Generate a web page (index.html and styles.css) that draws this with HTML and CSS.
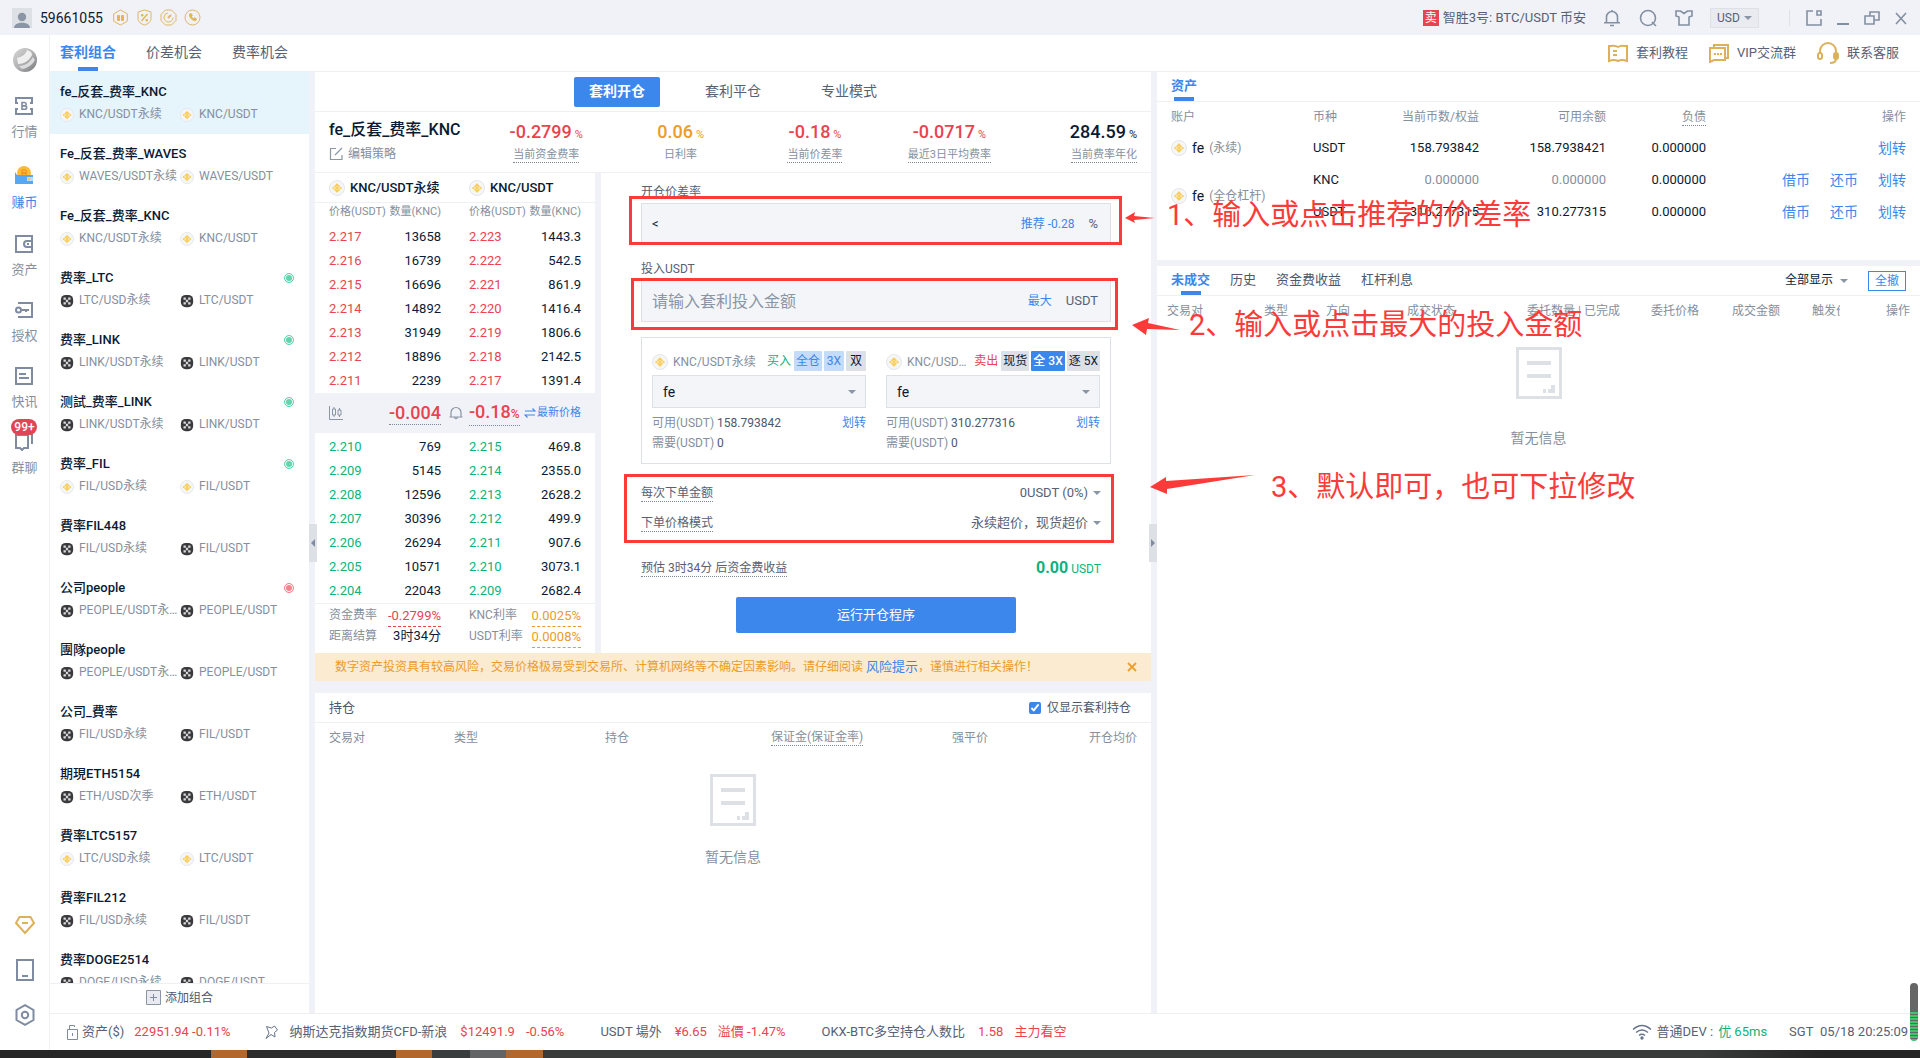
FILE: index.html
```html
<!DOCTYPE html>
<html lang="zh-CN">
<head>
<meta charset="utf-8">
<title>套利组合</title>
<link rel="stylesheet" href="styles.css">
</head>
<body>
<svg class="sprite" aria-hidden="true">
  <symbol id="bn" viewBox="0 0 16 16"><circle cx="8" cy="8" r="7.5" fill="#f5f6f8" stroke="#e3e6ea"/><path d="M8 3l5 5-5 5-5-5z" fill="#fbe3a6"/><path d="M8 3.6l2.600 2.600-1 1L8 5.600 6.400 7.200l-1-1zM8 12.400l2.600-2.600-1-1L8 10.400 6.400 8.800l-1 1zM8 6.700L9.300 8 8 9.300 6.700 8zM4.200 6.900L5.300 8 4.200 9.100 3.100 8zM11.800 6.900L12.900 8l-1.100 1.100L10.700 8z" fill="#f7c94f"/></symbol>
  <symbol id="ok" viewBox="0 0 16 16"><rect x="1" y="1" width="14" height="14" rx="5.500" fill="#3a3a3c"/><path d="M4 4h2.700v2.700H4zM9.300 4H12v2.700H9.300zM6.700 6.700h2.600v2.600H6.700zM4 9.300h2.700V12H4zM9.300 9.300H12V12H9.300z" fill="#d9dadc"/></symbol>
  <symbol id="doc" viewBox="0 0 46 52"><path d="M1.500 1.500h43v49h-43z" fill="#fff" stroke="#dde0e5" stroke-width="3"/><path d="M11 14h24v4H11zM11 27h24v4H11zM27 42h3v4h-3zM32 42h3v-4h4v8h-7z" fill="#dde0e5"/></symbol>
</svg>
<div class="app">
  <header class="titlebar">
    <div class="user">
      <svg width="20" height="20" viewBox="0 0 20 20"><path d="M0 0h20v20H0z" fill="#dde0e5"/><circle cx="10" cy="9" r="4.200" fill="#8a95a5"/><path d="M2 20c0-7 16-7 16 0z" fill="#8a95a5"/></svg>
      <span class="uid">59661055</span>
      <span class="medals">
        <svg width="17" height="17" viewBox="0 0 17 17" fill="none" stroke="#e0b65f"><path d="M8.500 1l6.800 3.800v7.400L8.500 16l-6.800-3.800V4.800z"/><path d="M5.500 6.500h2v5h-2zM9.500 6.500h2v5h-2z" fill="#e6b450"/></svg>
        <svg width="17" height="17" viewBox="0 0 17 17" fill="none" stroke="#e0b65f"><path d="M8.500 1l6.500 2v6c0 4-3 6-6.500 7C5 15 2 13 2 9V3z"/><path d="M11.500 5l-6 7" stroke-width="1.500"/><path d="M5.500 5.500h1.500v1.500H5.500zM10 10.500h1.500V12H10z" fill="#e6b450"/></svg>
        <svg width="17" height="17" viewBox="0 0 17 17" fill="none" stroke="#e0b65f"><path d="M5.500 1h6L16 5.500v6L11.500 16h-6L1 11.500v-6z"/><circle cx="8.500" cy="8.500" r="4.500" stroke-dasharray="20 8"/><path d="M8 9l3-3" stroke-width="1.800"/></svg>
        <svg width="17" height="17" viewBox="0 0 17 17" fill="none" stroke="#e0b65f"><circle cx="8.500" cy="8.500" r="7.500"/><path d="M5.500 5c-.5 3.500 3 7 6.500 6.500l.3-1.800-2-.9-.9.9c-1-.5-1.700-1.300-2-2.100l.9-.9-.9-2z" fill="#e6b450"/></svg>
      </span>
    </div>
    <div class="tools">
      <span class="sell">卖</span><span class="ticker">智胜3号: BTC/USDT 币安</span>
      <svg class="t1" width="18" height="18" viewBox="0 0 18 18" fill="none" stroke="#8390a2" stroke-width="1.600"><path d="M3.500 13V8a5.500 5.500 0 0 1 11 0v5M1 13.800h16M9 1v2M7 16.500h4"/></svg>
      <svg class="t2" width="18" height="18" viewBox="0 0 18 18" fill="none" stroke="#8390a2" stroke-width="1.600"><circle cx="9" cy="9" r="7.500"/><path d="M13 13l4 4"/></svg>
      <svg class="t2" width="18" height="18" viewBox="0 0 18 18" fill="none" stroke="#8390a2" stroke-width="1.600"><path d="M1 2h4.500L9 4.500 12.500 2H17v5l-3 1v8H4V8L1 7z"/></svg>
      <label class="cur"><select aria-label="货币"><option>USD</option></select></label>
      <i class="sep"></i>
      <svg class="t4" width="16" height="16" viewBox="0 0 16 16" fill="none" stroke="#8390a2" stroke-width="1.600"><path d="M7 1H1v14h14V9M11 1h4v4h-4z"/></svg>
      <svg class="t5" width="12" height="16" viewBox="0 0 12 16"><path d="M0 13h12v2H0z" fill="#8390a2"/></svg>
      <svg class="t5" width="16" height="16" viewBox="0 0 16 16" fill="none" stroke="#8390a2" stroke-width="1.600"><path d="M1 6h9v8H1zM6 6V2h9v8h-5"/></svg>
      <svg class="t5" width="12" height="16" viewBox="0 0 12 16" fill="none" stroke="#8390a2" stroke-width="1.600"><path d="M1 3l10 11M11 3L1 14"/></svg>
    </div>
  </header>

  <div class="body">
    <nav class="rail">
      <svg class="logo" width="24" height="24" viewBox="0 0 24 24"><defs><linearGradient id="g" x1="0" y1="0" x2="1" y2="1"><stop offset="0" stop-color="#d8d8d8"/><stop offset=".5" stop-color="#b2b2b4"/><stop offset="1" stop-color="#77787b"/></linearGradient></defs><circle cx="12" cy="12" r="12" fill="url(#g)"/><path d="M4 10C9 9 13 6 14 2c4 1 5 3 5 5-3 6-8 9-14 9z" fill="#efefef"/><path d="M6 18c6 0 11-4 14-9l2 3c-3 5-7 8-13 9z" fill="#dcdcdd"/></svg>
      <a class="nav" href="#"><svg width="18" height="18" viewBox="0 0 18 18" fill="none" stroke="#7f8ba0" stroke-width="2"><path d="M1 7V1h16v6M1 11v6h16v-6M1 6h2M1 12h2M17 6h-2M17 12h-2"/><path d="M7 5.500h2.500a1.700 1.700 0 0 1 0 3.400H7h3a1.700 1.700 0 0 1 0 3.400H7z" stroke-width="1.600"/></svg>行情</a>
      <a class="nav on" href="#"><svg width="18" height="18" viewBox="0 0 18 18"><circle cx="9" cy="7" r="7" fill="#fbbb35"/><path d="M7 4h3a1 1 0 0 1 0 3H7zM7 7h4v3H7z" fill="none" stroke="#ef8d1c"/><path d="M0 6l2 3h16v9H0z" fill="#56a8f5"/><path d="M12 11h6v4h-6z" fill="#bcdcff"/><circle cx="14" cy="13" r="1.200" fill="#f6c544"/></svg>赚币</a>
      <a class="nav" href="#"><svg width="18" height="18" viewBox="0 0 18 18" fill="none" stroke="#7f8ba0" stroke-width="2"><path d="M1 1h16v16H1z"/><path d="M17 6h-5a3 3 0 0 0 0 6h5M12 9h2"/></svg>资产</a>
      <a class="nav" href="#"><svg width="18" height="18" viewBox="0 0 18 18" fill="none" stroke="#7f8ba0" stroke-width="2"><path d="M4 3V2h13v14H4v-1"/><circle cx="3.500" cy="9" r="2.500"/><path d="M6 9h8M11 8v3" /></svg>授权</a>
      <a class="nav" href="#"><svg width="18" height="18" viewBox="0 0 18 18" fill="none" stroke="#7f8ba0" stroke-width="2"><path d="M1 1h16v16H1zM4 7h7M4 11h10"/></svg>快讯</a>
      <a class="nav" href="#"><svg width="18" height="18" viewBox="0 0 18 18" fill="none" stroke="#7f8ba0" stroke-width="2"><path d="M1 2h12v13H9l-2 2-2-2H1zM14 1h3v10"/></svg>群聊<b class="badge">99+</b></a>
      <div class="railend">
        <svg width="20" height="22" viewBox="0 0 20 22" fill="none" stroke="#dcb15b" stroke-width="2"><path d="M4.500 3h11L19 9l-9 10L1 9zM7 9h6"/></svg>
        <svg width="20" height="22" viewBox="0 0 20 22" fill="none" stroke="#7f8ba0" stroke-width="2"><path d="M2 1h16v20H2zM7 17h6"/></svg>
        <svg width="20" height="22" viewBox="0 0 20 22" fill="none" stroke="#7f8ba0" stroke-width="2"><path d="M10 1.200l8.500 4.800v10L10 20.800 1.500 16V6z"/><circle cx="10" cy="11" r="3.200"/></svg>
      </div>
    </nav>

    <div class="work">
      <div class="subhead">
        <div class="tabs">
          <a class="on" href="#">套利组合</a><a href="#">价差机会</a><a href="#">费率机会</a>
        </div>
        <div class="help">
          <a href="#"><svg width="20" height="20" viewBox="0 0 20 20" fill="none" stroke="#dcb15b" stroke-width="2"><path d="M1 3l2 0q4-1 7 1 3-2 7-1l2 0v15q-5-2-9 0-4-2-9 0zM5 8h4M5 12h4"/></svg>套利教程</a>
          <a href="#"><svg width="20" height="20" viewBox="0 0 20 20" fill="none" stroke="#dcb15b" stroke-width="2"><path d="M5 4V2h14v13h-3M1 5h15v12H5l-4 2z"/><path d="M5 11h2M8 11h2M11 11h2"/></svg>VIP交流群</a>
          <a href="#"><svg width="22" height="22" viewBox="0 0 22 22" fill="none" stroke="#dcb15b" stroke-width="2"><path d="M3 11V9a8 8 0 0 1 16 0v8q0 4-6 4"/><rect x="1" y="11" width="4" height="6" rx="2"/><rect x="17" y="11" width="4" height="6" rx="2"/></svg>联系客服</a>
        </div>
      </div>

      <div class="cols">
        <aside class="side">
          <ul class="combos">
            <li class="on"><h3>fe_反套_费率_KNC</h3><p><svg><use href="#bn"/></svg><span>KNC/USDT永续</span><svg><use href="#bn"/></svg><span>KNC/USDT</span></p></li>
            <li><h3>Fe_反套_费率_WAVES</h3><p><svg><use href="#bn"/></svg><span>WAVES/USDT永续</span><svg><use href="#bn"/></svg><span>WAVES/USDT</span></p></li>
            <li><h3>Fe_反套_费率_KNC</h3><p><svg><use href="#bn"/></svg><span>KNC/USDT永续</span><svg><use href="#bn"/></svg><span>KNC/USDT</span></p></li>
            <li><h3>费率_LTC<i class="dot"></i></h3><p><svg><use href="#ok"/></svg><span>LTC/USD永续</span><svg><use href="#ok"/></svg><span>LTC/USDT</span></p></li>
            <li><h3>费率_LINK<i class="dot"></i></h3><p><svg><use href="#ok"/></svg><span>LINK/USDT永续</span><svg><use href="#ok"/></svg><span>LINK/USDT</span></p></li>
            <li><h3>测試_费率_LINK<i class="dot"></i></h3><p><svg><use href="#ok"/></svg><span>LINK/USDT永续</span><svg><use href="#ok"/></svg><span>LINK/USDT</span></p></li>
            <li><h3>费率_FIL<i class="dot"></i></h3><p><svg><use href="#bn"/></svg><span>FIL/USD永续</span><svg><use href="#bn"/></svg><span>FIL/USDT</span></p></li>
            <li><h3>費率FIL448</h3><p><svg><use href="#ok"/></svg><span>FIL/USD永续</span><svg><use href="#ok"/></svg><span>FIL/USDT</span></p></li>
            <li><h3>公司people<i class="dot stop"></i></h3><p><svg><use href="#ok"/></svg><span>PEOPLE/USDT永续</span><svg><use href="#ok"/></svg><span>PEOPLE/USDT</span></p></li>
            <li><h3>團隊people</h3><p><svg><use href="#ok"/></svg><span>PEOPLE/USDT永续</span><svg><use href="#ok"/></svg><span>PEOPLE/USDT</span></p></li>
            <li><h3>公司_費率</h3><p><svg><use href="#ok"/></svg><span>FIL/USD永续</span><svg><use href="#ok"/></svg><span>FIL/USDT</span></p></li>
            <li><h3>期現ETH5154</h3><p><svg><use href="#ok"/></svg><span>ETH/USD次季</span><svg><use href="#ok"/></svg><span>ETH/USDT</span></p></li>
            <li><h3>費率LTC5157</h3><p><svg><use href="#bn"/></svg><span>LTC/USD永续</span><svg><use href="#bn"/></svg><span>LTC/USDT</span></p></li>
            <li><h3>費率FIL212</h3><p><svg><use href="#ok"/></svg><span>FIL/USD永续</span><svg><use href="#ok"/></svg><span>FIL/USDT</span></p></li>
            <li><h3>费率DOGE2514</h3><p><svg><use href="#ok"/></svg><span>DOGE/USD永续</span><svg><use href="#ok"/></svg><span>DOGE/USDT</span></p></li>
          </ul>
          <button class="add" type="button"><svg width="15" height="15" viewBox="0 0 15 15"><path d="M.5.500h14v14H.5z" fill="#e8eaef" stroke="#8a95a5"/><path d="M7.500 4v7M4 7.500h7" stroke="#7f8ba0"/></svg>添加组合</button>
        </aside>

        <main class="main">
          <div class="modes"><button class="on" type="button">套利开仓</button><button type="button">套利平仓</button><button type="button">专业模式</button></div>
          <section class="stats">
            <div class="name"><h2>fe_反套_费率_KNC</h2><a href="#"><svg width="14" height="14" viewBox="0 0 14 14" fill="none" stroke="#8a95a5" stroke-width="1.200"><path d="M7 1.500H1.500v11H13V8M6 8l7-7"/></svg>编辑策略</a></div>
            <div class="red"><b>-0.2799</b> <small>%</small><p><u>当前资金费率</u></p></div>
            <div class="gold"><b>0.06</b> <small>%</small><p>日利率</p></div>
            <div class="red"><b>-0.18</b> <small>%</small><p><u>当前价差率</u></p></div>
            <div class="red"><b>-0.0717</b> <small>%</small><p><u>最近3日平均费率</u></p></div>
            <div class="last"><b>284.59</b> <small>%</small><p><u>当前费率年化</u></p></div>
          </section>
          <div class="trade">
            <section class="book">
              <div class="pair"><span><svg><use href="#bn"/></svg>KNC/USDT永续</span><span><svg><use href="#bn"/></svg>KNC/USDT</span></div>
              <table class="asks">
                <thead><tr><th>价格(USDT)</th><th>数量(KNC)</th><th>价格(USDT)</th><th>数量(KNC)</th></tr></thead>
                <tbody>
                <tr><td>2.217</td><td>13658</td><td>2.223</td><td>1443.3</td></tr>
                <tr><td>2.216</td><td>16739</td><td>2.222</td><td>542.5</td></tr>
                <tr><td>2.215</td><td>16696</td><td>2.221</td><td>861.9</td></tr>
                <tr><td>2.214</td><td>14892</td><td>2.220</td><td>1416.4</td></tr>
                <tr><td>2.213</td><td>31949</td><td>2.219</td><td>1806.6</td></tr>
                <tr><td>2.212</td><td>18896</td><td>2.218</td><td>2142.5</td></tr>
                <tr><td>2.211</td><td>2239</td><td>2.217</td><td>1391.4</td></tr>
                </tbody>
              </table>
              <div class="mid">
                <svg width="14" height="14" viewBox="0 0 14 14" fill="none" stroke="#8a95a5"><path d="M.5 0v13.500H14M5 1v2M5 9v2M3.500 3h3v6h-3zM10.500 2v2M10.500 9v2M9 4h3v5H9z"/></svg>
                <b class="diff"><u>-0.004</u></b>
                <svg class="bell" width="14" height="14" viewBox="0 0 14 14" fill="none" stroke="#8a95a5" stroke-width="1.200"><path d="M2 11V6.500a5 5 0 0 1 10 0V11M.5 11h13M5.500 11.500q1.500 2.500 3 0"/></svg>
                <b><u>-0.18<small>%</small></u></b>
                <a href="#"><svg width="12" height="10" viewBox="0 0 12 10" fill="none" stroke="#3b87ec" stroke-width="1.200"><path d="M1 3h10L8.500.5M11 7H1l2.500 2.500"/></svg>最新价格</a>
              </div>
              <table class="bids">
                <tbody>
                <tr><td>2.210</td><td>769</td><td>2.215</td><td>469.8</td></tr>
                <tr><td>2.209</td><td>5145</td><td>2.214</td><td>2355.0</td></tr>
                <tr><td>2.208</td><td>12596</td><td>2.213</td><td>2628.2</td></tr>
                <tr><td>2.207</td><td>30396</td><td>2.212</td><td>499.9</td></tr>
                <tr><td>2.206</td><td>26294</td><td>2.211</td><td>907.6</td></tr>
                <tr><td>2.205</td><td>10571</td><td>2.210</td><td>3073.1</td></tr>
                <tr><td>2.204</td><td>22043</td><td>2.209</td><td>2682.4</td></tr>
                </tbody>
              </table>
              <div class="rates">
                <span>资金费率<u class="red">-0.2799%</u></span><span>KNC利率<u class="gold">0.0025%</u></span>
                <span>距离结算<em>3时34分</em></span><span>USDT利率<u class="gold">0.0008%</u></span>
              </div>
            </section>

            <form class="form">
              <label class="lab" for="spread">开仓价差率</label>
              <div class="field"><span class="lt">&lt;</span><input id="spread" type="text"><button type="button">推荐 -0.28</button><span class="unit">%</span></div>
              <label class="lab second" for="amount">投入USDT</label>
              <div class="field"><input id="amount" type="text" placeholder="请输入套利投入金额"><button type="button">最大</button><span class="unit">USDT</span></div>
              <div class="legs">
                <div class="leg">
                  <div class="tags"><svg><use href="#bn"/></svg><span class="sym">KNC/USDT永续</span><span class="side-tag green">买入</span><button class="soft" type="button">全仓</button><button class="soft" type="button">3X</button><button type="button">双</button></div>
                  <label class="pick"><select aria-label="永续账户"><option>fe</option></select></label>
                  <p>可用(USDT) <em>158.793842</em><a href="#">划转</a></p>
                  <p>需要(USDT) <em>0</em></p>
                </div>
                <div class="leg">
                  <div class="tags"><svg><use href="#bn"/></svg><span class="sym">KNC/USDT现货</span><span class="side-tag red">卖出</span><button type="button">现货</button><button class="solid" type="button">全 3X</button><button type="button">逐 5X</button></div>
                  <label class="pick"><select aria-label="现货账户"><option>fe</option></select></label>
                  <p>可用(USDT) <em>310.277316</em><a href="#">划转</a></p>
                  <p>需要(USDT) <em>0</em></p>
                </div>
              </div>
              <div class="opts">
                <div class="row"><label for="per"><u>每次下单金额</u></label><span class="drop"><select id="per"><option>0USDT (0%)</option></select></span></div>
                <div class="row"><label for="mode"><u>下单价格模式</u></label><span class="drop"><select id="mode"><option>永续超价，现货超价</option></select></span></div>
              </div>
              <div class="row est"><u>预估 3时34分 后资金费收益</u><span class="green"><b>0.00</b> USDT</span></div>
              <button class="run" type="button">运行开仓程序</button>

              <div class="mark m1"></div><div class="mark m2"></div><div class="mark m3"></div>
              <svg class="arrow a1" width="30" height="12" viewBox="0 0 30 12"><path d="M0 6l10-6-1 4 21 2-21 2 1 3z" fill="#fb3b3a"/></svg>
              <svg class="arrow a2" width="50" height="18" viewBox="0 0 50 18"><path d="M0 7L17 0l-1 5 32 7-33-1-1 6z" fill="#fb3b3a"/></svg>
              <svg class="arrow a3" width="106" height="20" viewBox="0 0 106 20"><path d="M0 12L16 2v4L105 0 17 14v5z" fill="#fb3b3a"/></svg>
              <p class="note n1">1、输入或点击推荐的价差率</p>
              <p class="note n2">2、输入或点击最大的投入金额</p>
              <p class="note n3">3、默认即可，也可下拉修改</p>
            </form>
          </div>
          <div class="warn"><p>数字资产投资具有较高风险，交易价格极易受到交易所、计算机网络等不确定因素影响。请仔细阅读 <a href="#">风险提示</a>，谨慎进行相关操作！</p><button type="button" aria-label="关闭"><svg width="10" height="10" viewBox="0 0 10 10" stroke="#eba02e" stroke-width="1.800"><path d="M1 1l8 8M9 1L1 9"/></svg></button></div>
          <section class="positions">
            <div class="phead"><h3>持仓</h3><label><input type="checkbox" checked>仅显示套利持仓</label></div>
            <table><thead><tr><th>交易对</th><th>类型</th><th>持仓</th><th><u>保证金(保证金率)</u></th><th>强平价</th><th>开仓均价</th></tr></thead></table>
            <div class="empty"><svg width="46" height="52"><use href="#doc"/></svg><p>暂无信息</p></div>
          </section>
          <button class="handle hl" type="button" aria-label="收起左栏"></button>
          <button class="handle hr" type="button" aria-label="收起右栏"></button>
        </main>

        <div class="right">
          <section class="assets">
            <div class="rtabs"><a class="on" href="#">资产</a></div>
            <table>
              <thead><tr><th>账户</th><th>币种</th><th>当前币数/权益</th><th>可用余额</th><th><u>负债</u></th><th>操作</th></tr></thead>
              <tbody>
              <tr><td><span class="acc"><svg><use href="#bn"/></svg>fe <small>(永续)</small></span></td><td>USDT</td><td>158.793842</td><td>158.7938421</td><td>0.000000</td><td><a href="#">划转</a></td></tr>
              <tr><td rowspan="2"><span class="acc"><svg><use href="#bn"/></svg>fe <small>(全仓杠杆)</small></span></td><td>KNC</td><td class="zero">0.000000</td><td class="zero">0.000000</td><td>0.000000</td><td><a href="#">借币</a><a href="#">还币</a><a href="#">划转</a></td></tr>
              <tr><td>USDT</td><td>310.277315</td><td>310.277315</td><td>0.000000</td><td><a href="#">借币</a><a href="#">还币</a><a href="#">划转</a></td></tr>
              </tbody>
            </table>
          </section>
          <section class="orders">
            <div class="rtabs"><a class="on" href="#">未成交</a><a href="#">历史</a><a href="#">资金费收益</a><a href="#">杠杆利息</a><span class="drop all"><select aria-label="显示范围"><option>全部显示</option></select></span><button type="button">全撤</button></div>
            <table><thead><tr><th>交易对</th><th>类型</th><th>方向</th><th>成交状态</th><th>委托数量 | 已完成</th><th>委托价格</th><th>成交金额</th><th><span class="cut">触发价</span></th><th>操作</th></tr></thead></table>
            <div class="empty"><svg width="46" height="52"><use href="#doc"/></svg><p>暂无信息</p></div>
          </section>
        </div>
      </div>

      <footer class="status">
        <span class="s1"><svg width="11" height="16" viewBox="0 0 11 16" fill="none" stroke="#7f8ba0"><path d="M.5 5.500h10v10H.5zM2.500 5V1.500h5V3M5.500 9v3"/></svg>资产($)</span><span class="red s2">22951.94 -0.11%</span>
        <svg class="s3" width="14" height="14" viewBox="0 0 14 14" fill="none" stroke="#66738a"><path d="M2.500 1.500l5 1.500 3-2 3 4-3 2.500.5 4.500-4-2.500-5 4 3-5.500z"/></svg>
        <span class="s4">纳斯达克指数期货CFD-新浪</span><span class="red s5">$12491.9</span><span class="red s6">-0.56%</span>
        <span class="s7">USDT 場外</span><span class="red s5">¥6.65</span><span class="red s6">溢價 -1.47%</span>
        <span class="s7">OKX-BTC多空持仓人数比</span><span class="red s5">1.58</span><span class="red s6">主力看空</span>
        <span class="net"><svg width="20" height="16" viewBox="0 0 20 16" fill="none" stroke="#66738a" stroke-width="1.400"><path d="M1 5.500q9-8 18 0M4 8.500q6-5 12 0M7 11.500q3-2.500 6 0"/><circle cx="10" cy="14" r="1" fill="#66738a"/></svg>普通DEV : <em class="green">优 65ms</em></span>
        <time>SGT&ensp;05/18 20:25:09</time>
      </footer>
    </div>
  </div>
  <div class="taskbar"></div>
  <div class="pill"></div>
</div>
</body>
</html>
```

FILE: styles.css
```css
* { box-sizing: border-box; margin: 0; padding: 0; }
body { font: 12px/16px Roboto, "Noto Sans CJK SC", sans-serif; color: #0b1a33; background: #f1f2f7; }
button, input, select { font: inherit; color: inherit; border: 0; background: none; outline: 0; }
a { color: inherit; text-decoration: none; }
ul { list-style: none; }
em { font-style: normal; }
u { text-decoration: none; display: inline-block; border-bottom: 1px dotted #7c8798; }
svg { flex: none; display: block; }
th { font-weight: 400; text-align: left; white-space: nowrap; }
table { border-collapse: collapse; table-layout: fixed; }
h2, h3 { font-weight: 500; }
.sprite { position: absolute; width: 0; height: 0; }
.red { color: #e8434f; }
.gold { color: #eb9c2a; }
.green { color: #0db27c; }

.app { height: 100vh; display: flex; flex-direction: column; position: relative; overflow: hidden; }
.titlebar { height: 35px; flex: none; display: flex; justify-content: space-between; align-items: center; padding: 0 13px 0 12px; }
.user, .tools, .medals { display: flex; align-items: center; }
.uid { font-size: 14px; margin: 0 9px 0 8px; }
.medals { gap: 7px; }
.tools { font-size: 13px; color: #566176; }
.sell { width: 16px; height: 16px; background: #e8434f; color: #fff; font-size: 12px; line-height: 16px; text-align: center; margin-right: 4px; }
.t1 { margin-left: 17px; }
.t2 { margin-left: 18px; }
.cur { margin-left: 17px; width: 49px; height: 20px; border: 1px solid #dde0e5; background: #e9ebf0; position: relative; font-size: 12px; }
.cur select { appearance: none; width: 100%; height: 18px; padding-left: 6px; }
.cur::after, .drop::after, .pick::after { content: ""; position: absolute; right: 6px; top: 50%; margin-top: -2px; border: 4px solid transparent; border-top-color: #8a95a5; border-bottom: 0; pointer-events: none; }
.sep { width: 1px; height: 16px; background: #dde0e5; margin-left: 30px; }
.t4 { margin-left: 16px; }
.t5 { margin-left: 15px; }

.body { flex: 1; min-height: 0; display: flex; background: #fff; }
.rail { width: 50px; flex: none; border-right: 1px solid #eff0f4; display: flex; flex-direction: column; align-items: center; padding-top: 13px; }
.logo { margin-bottom: 14px; }
.nav { position: relative; height: 66px; padding-top: 11px; display: flex; flex-direction: column; align-items: center; font-size: 13px; color: #8590a0; gap: 9px; }
.nav.on { color: #3b87ec; margin: 3px 0; gap: 11px; }
.badge { position: absolute; left: 0; top: -3px; width: 26px; background: #e04554; color: #fff; border-radius: 8px; font-size: 12px; font-weight: 500; text-align: center; }
.railend { margin-top: auto; padding-bottom: 24px; display: grid; gap: 23px; }

.work { flex: 1; min-width: 0; display: flex; flex-direction: column; }
.subhead { height: 37px; flex: none; border-bottom: 1px solid #eff0f4; display: flex; justify-content: space-between; color: #566176; padding: 0 21px 0 10px; }
.tabs { display: flex; gap: 30px; font-size: 14px; line-height: 34px; }
.on { position: relative; }
.tabs .on { color: #3b87ec; font-weight: 700; }
.tabs .on::after, .rtabs .on::after { content: ""; position: absolute; left: 50%; bottom: 0; margin-left: -10px; width: 20px; height: 4px; background: #3b87ec; }
.help { display: flex; gap: 21px; font-size: 13px; }
.help a { display: flex; align-items: center; gap: 8px; }

.cols { flex: 1; min-height: 0; display: grid; grid-template-columns: 259px minmax(0, 836fr) minmax(0, 763fr); gap: 6px; background: #f1f2f7; }
.side { display: flex; flex-direction: column; background: #fff; min-height: 0; }
.combos { flex: 1; min-height: 0; overflow: hidden; }
.combos li { height: 62px; padding: 12px 15px 0 10px; }
.combos .on { background: #e6f4fc; }
.combos h3 { font-size: 13px; display: flex; justify-content: space-between; align-items: center; }
.combos p { display: grid; grid-template-columns: 14px 96px 14px 1fr; column-gap: 5px; color: #858f9e; margin-top: 6px; align-items: center; }
.combos svg { width: 14px; height: 14px; margin-top: 2px; }
.combos span { overflow: hidden; text-overflow: ellipsis; white-space: nowrap; margin-right: -5px; }
.dot { width: 10px; height: 10px; border-radius: 50%; border: 1px solid #62d3ae; background: #62d3ae; box-shadow: inset 0 0 0 1px #fff; }
.stop { border-color: #f0858d; background: #f0858d; }
.add { height: 30px; flex: none; border-top: 1px solid #eff0f4; display: flex; justify-content: center; align-items: center; gap: 4px; color: #4c586d; padding-bottom: 2px; }

.main { position: relative; z-index: 1; display: flex; flex-direction: column; min-height: 0; }
.modes { height: 40px; flex: none; background: #fff; border-bottom: 1px solid #eff0f4; display: flex; justify-content: center; gap: 30px; padding-top: 5px; }
.modes button { width: 86px; height: 30px; font-size: 14px; color: #566176; border-radius: 2px; padding-bottom: 2px; }
.modes .on { background: #3b87ec; color: #fff; font-weight: 700; }
.stats { height: 61px; flex: none; background: #fff; border-bottom: 1px solid #eff0f4; display: grid; grid-template-columns: 150px repeat(5, 1fr); padding-left: 14px; text-align: center; white-space: nowrap; }
.stats > div { padding-top: 11px; line-height: 18px; }
.stats b { font-size: 18px; font-weight: 500; }
.stats small { font-size: 11px; }
.stats p { font-size: 11px; line-height: 14px; color: #858f9e; margin-top: 4px; }
.stats .last { text-align: right; padding-right: 14px; }
.stats .name { text-align: left; padding-top: 9px; }
.stats h2 { font-size: 16px; }
.name a { display: flex; align-items: center; gap: 5px; color: #858f9e; margin-top: 6px; }

.trade { flex: none; display: grid; grid-template-columns: 280px minmax(0, 1fr); gap: 6px; }
.book { background: #fff; }
.pair { display: grid; grid-template-columns: 112px 112px; gap: 28px; height: 30px; border-bottom: 1px solid #eff0f4; padding-left: 14px; font-size: 13px; font-weight: 500; white-space: nowrap; }
.pair span, .tags, .acc { display: flex; align-items: center; gap: 5px; }
.pair svg, .tags svg, .acc svg { width: 16px; height: 16px; }
.book table { width: 252px; margin: 0 14px; font-size: 13px; }
.book th { font-size: 11px; color: #858f9e; height: 22px; line-height: 18px; vertical-align: top; }
.book td { height: 24px; }
.book tr > :nth-child(1) { width: 57px; }
.book tr > :nth-child(3) { width: 85px; padding-left: 28px; }
.book tr > :nth-child(even) { width: 55px; text-align: right; }
.asks td:nth-child(odd) { color: #e8434f; }
.bids td:nth-child(odd) { color: #0db27c; }
.mid { height: 40px; background: #f1f2f7; margin-bottom: 2px; padding: 0 14px; display: flex; align-items: center; color: #e8434f; }
.mid b { font-size: 18px; line-height: 22px; font-weight: 500; }
.mid small { font-size: 12px; }
.mid .diff { width: 98px; text-align: right; }
.bell { margin: 0 6px 0 8px; }
.mid a { display: flex; align-items: center; gap: 1px; color: #3b87ec; font-size: 11px; margin-left: auto; white-space: nowrap; }
.rates { border-top: 1px solid #eff0f4; padding: 1px 14px 0; display: grid; grid-template-columns: 1fr 1fr; column-gap: 28px; color: #858f9e; }
.rates span { height: 21px; display: flex; justify-content: space-between; line-height: 20px; white-space: nowrap; }
.rates em, .rates u { font-size: 13px; }
.rates em { color: #0b1a33; }
.rates u { border-bottom: 1px dashed; height: 22px; line-height: 22px; }

.form { position: relative; background: #fff; padding: 11px 40px 20px; color: #566176; }
.lab { display: block; }
.second { margin-top: 16px; }
.field { height: 42px; margin-top: 3px; border: 1px solid #dde0e5; background: #f4f5f8; display: flex; align-items: center; padding: 0 12px 0 10px; }
.field input { flex: 1; min-width: 0; font-size: 16px; }
.field input::placeholder { color: #8a95a5; }
.field button { color: #3b87ec; }
.lt { color: #0b1a33; font-size: 13px; }
.unit { margin-left: 14px; font-size: 13px; }
.legs { margin-top: 15px; border: 1px solid #dde0e5; padding: 13px 10px 10px; display: grid; grid-template-columns: 1fr 1fr; gap: 20px; }
.leg { min-width: 0; }
.tags { height: 20px; gap: 2px; margin-bottom: 4px; }
.tags svg { margin-top: 2px; }
.sym { flex: 1; min-width: 0; overflow: hidden; text-overflow: ellipsis; white-space: nowrap; color: #858f9e; margin: 2px 0 0 3px; }
.side-tag { white-space: nowrap; margin-right: 1px; }
.tags button { height: 20px; min-width: 20px; padding: 0 2px; background: #dde0e5; color: #0b1a33; white-space: nowrap; border-radius: 1px; }
.tags .soft { background: #c4dbf9; color: #3b87ec; }
.tags .solid { background: #3b87ec; color: #fff; font-weight: 500; }
.pick { display: block; position: relative; height: 33px; border: 1px solid #dde0e5; background: #f4f5f8; margin-bottom: 5px; color: #0b1a33; font-size: 14px; }
.pick select { appearance: none; width: 100%; height: 31px; padding-left: 10px; }
.pick::after { right: 9px; }
.leg p { line-height: 20px; color: #858f9e; }
.leg em { color: #4c586d; }
.leg a { float: right; color: #3b87ec; }
.opts { margin-top: 14px; }
.row { height: 30px; display: flex; justify-content: space-between; align-items: center; padding-right: 10px; }
.drop { position: relative; font-size: 13px; }
.drop select { appearance: none; padding-right: 13px; text-align-last: right; }
.drop::after { right: 0; }
.est { margin-top: 15px; }
.est b { font-size: 16px; }
.run { display: block; width: 280px; height: 36px; margin: 14px auto 0; background: #3b87ec; color: #fff; font-size: 13px; border-radius: 2px; }

.mark, .arrow, .note { position: absolute; pointer-events: none; }
.mark { border: 3px solid #fb3b3a; }
.m1 { left: 28px; right: 29px; top: 23px; height: 49px; }
.m2 { left: 30px; right: 33px; top: 105px; height: 52px; }
.m3 { left: 23px; right: 37px; top: 301px; height: 69px; }
.a1 { left: calc(100% - 26px); top: 39px; }
.a2 { left: calc(100% - 19px); top: 145px; }
.a3 { left: calc(100% - 1px); top: 302px; }
.note { color: #fb3b3a; font-size: 29px; line-height: 40px; white-space: nowrap; }
.n1 { left: calc(100% + 16px); top: 22px; }
.n2 { left: calc(100% + 38px); top: 132px; }
.n3 { left: calc(100% + 120px); top: 294px; }

.warn { height: 28px; flex: none; background: #fbebd1; color: #eb9c2a; display: flex; justify-content: space-between; align-items: center; padding: 0 14px 0 20px; white-space: nowrap; }
.warn a { color: #3b87ec; font-size: 13px; }
.positions { flex: 1; min-height: 0; background: #fff; margin-top: 12px; color: #858f9e; }
.phead { height: 30px; border-bottom: 1px solid #eff0f4; display: flex; justify-content: space-between; align-items: center; padding: 0 20px 0 14px; color: #4c586d; }
.phead h3 { font-size: 13px; font-weight: 400; }
.phead label { display: flex; align-items: center; gap: 6px; }
.phead input { width: 12px; height: 12px; accent-color: #3b87ec; }
.positions table { width: calc(100% - 28px); margin: 0 14px; }
.positions th { height: 29px; }
.positions th:nth-child(1) { width: 125px; }
.positions th:nth-child(2) { width: 151px; }
.positions th:nth-child(3) { width: 166px; }
.positions th:nth-child(4) { width: 181px; }
.positions th:last-child { text-align: right; }
.empty { display: flex; flex-direction: column; align-items: center; padding-top: 22px; gap: 23px; font-size: 14px; color: #858f9e; }
.orders .empty { gap: 31px; }
.handle { position: absolute; top: 452px; width: 8px; height: 38px; background: #dde0e5; display: grid; place-items: center; }
.handle::after { content: ""; border: 4px solid transparent; border-right-color: #7f8ba0; border-left: 0; }
.hl { left: -6px; }
.hr { right: -6px; }
.hr::after { border: 4px solid transparent; border-left-color: #7f8ba0; border-right: 0; }

.right { display: flex; flex-direction: column; gap: 6px; min-height: 0; }
.assets, .orders { background: #fff; }
.assets { height: 188px; flex: none; }
.orders { flex: 1; }
.rtabs { height: 30px; border-bottom: 1px solid #eff0f4; display: flex; gap: 20px; padding: 0 14px; font-size: 13px; line-height: 28px; color: #4c586d; }
.rtabs .on { color: #3b87ec; font-weight: 700; }
.rtabs button { width: 38px; height: 20px; line-height: 18px; border: 1px solid #3b87ec; color: #3b87ec; font-size: 12px; margin-top: 5px; }
.all { margin-left: auto; font-size: 12px; color: #0b1a33; }
.all select { padding-right: 15px; }
.assets table { width: calc(100% - 28px); margin: 0 14px; font-size: 13px; }
.assets th { height: 30px; font-size: 12px; color: #858f9e; width: 142px; }
.assets th:nth-child(2) { width: 60px; }
.assets th:nth-child(3) { width: 106px; }
.assets th:nth-child(4) { width: 127px; }
.assets th:nth-child(5) { width: 100px; }
.assets th:nth-child(6) { width: auto; }
.assets th:nth-child(n+3), .assets td:nth-last-child(-n+4) { text-align: right; }
.assets td { height: 32px; }
.assets td a { color: #3b87ec; font-size: 14px; margin-left: 20px; }
.assets .zero, .acc small { color: #858f9e; }
.acc { font-size: 14px; }
.acc small { font-size: 12px; }
.orders table { width: calc(100% - 20px); margin: 0 10px; color: #858f9e; }
.orders th { height: 29px; width: 81px; }
.orders th:nth-child(1) { width: 97px; }
.orders th:nth-child(2) { width: 62px; }
.orders th:nth-child(4) { width: 120px; }
.orders th:nth-child(5) { width: 124px; }
.orders th:nth-child(7) { width: 80px; }
.orders th:nth-child(8) { width: 74px; }
.orders th:nth-child(9) { width: auto; text-align: right; }
.cut { display: block; width: 28px; overflow: hidden; }

.status { height: 37px; flex: none; border-top: 1px solid #eff0f4; display: flex; align-items: center; font-size: 13px; color: #566176; padding: 0 12px 0 17px; white-space: nowrap; }
.s1, .net { display: flex; align-items: center; gap: 4px; }
.s2 { margin-left: 10px; }
.s3 { margin-left: 33px; }
.s4 { margin-left: 12px; }
.s5 { margin-left: 13px; }
.s6 { margin-left: 11px; }
.s7 { margin-left: 36px; }
.net { margin-left: auto; gap: 5px; }
.status time { margin-left: 22px; }
.taskbar { height: 8px; flex: none; background: linear-gradient(90deg, #262626 211px, #b0682f 211px 247px, #2c2c2c 247px 396px, #b0682f 396px 432px, #3a3d3e 432px 470px, #636466 470px 506px, #b0682f 506px 543px, #393a3a 543px 1700px, #242424 1820px); }
.pill { position: absolute; right: 2px; bottom: 17px; width: 8px; height: 58px; border-radius: 4px; background: repeating-linear-gradient(#3fc46b 0 2px, #666 2px 3px) 0 100% / 100% 29px no-repeat #666; }
```
